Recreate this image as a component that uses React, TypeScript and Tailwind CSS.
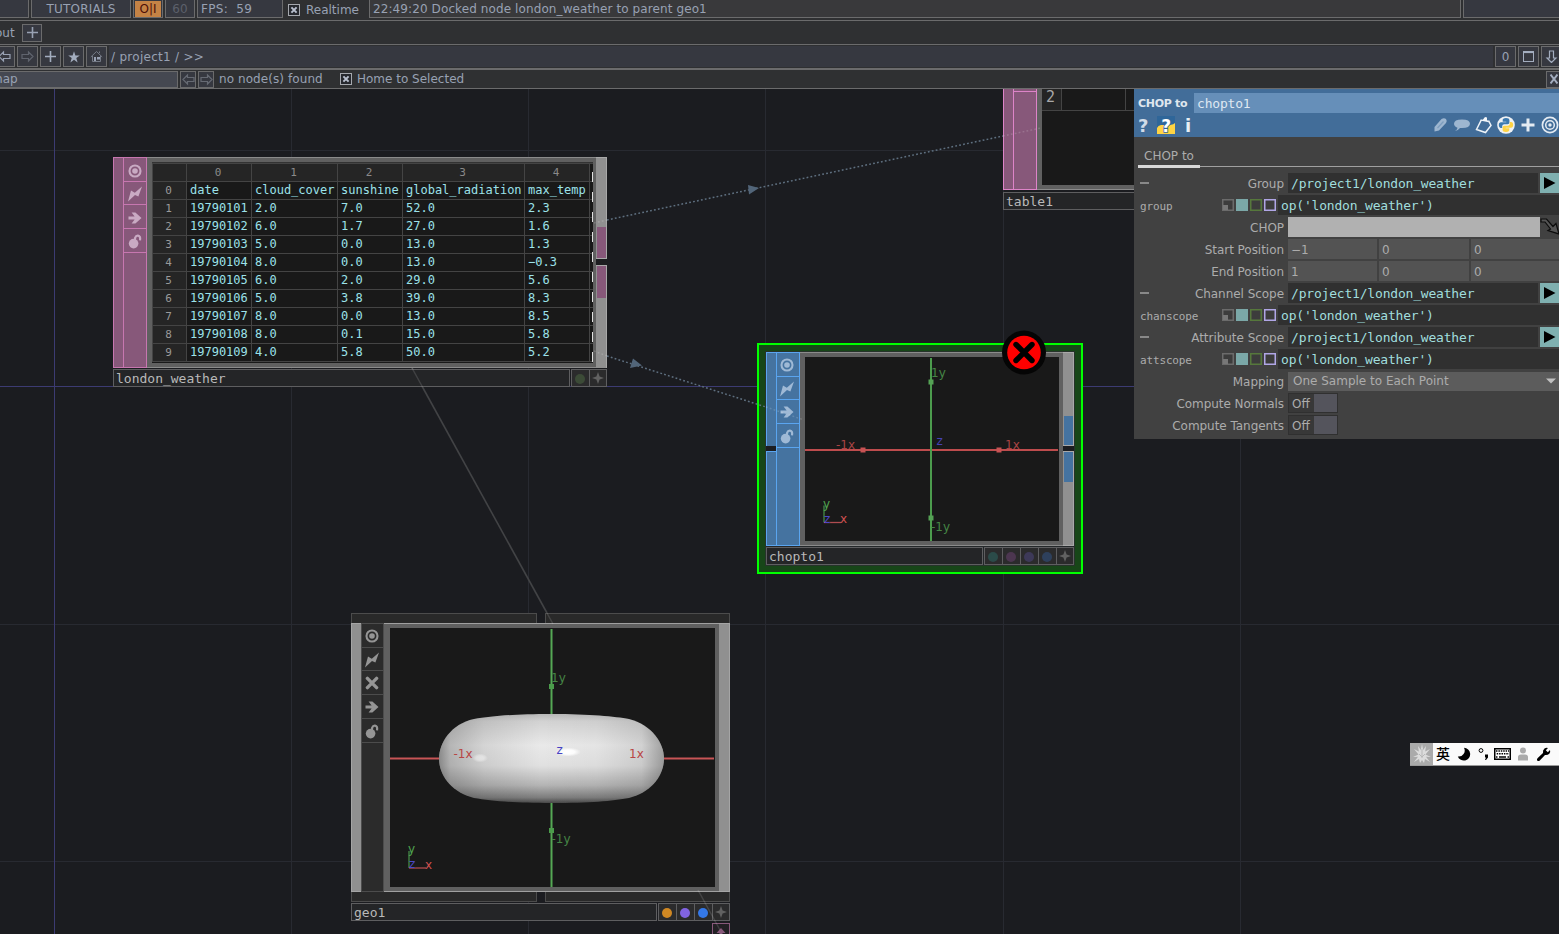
import React from "react";

type Kids = { children?: React.ReactNode };

/* ---------- shared glyphs ---------- */

function Target() {
  return (
    <svg width="14" height="14" viewBox="0 0 14 14">
      <circle cx="7" cy="7" r="5.5" fill="none" stroke="currentColor" strokeWidth="2.1" />
      <circle cx="7" cy="7" r="2.8" fill="currentColor" />
    </svg>
  );
}
function Bolt() {
  return (
    <svg width="16" height="16" viewBox="0 0 16 16">
      <path d="M1 15.5 L4 4.6 L7.8 6.8 L15 0.5 L11.4 10.6 L8 8.9 Z" fill="currentColor" />
    </svg>
  );
}
function Arrow() {
  return (
    <svg width="14" height="14" viewBox="0 0 14 14">
      <path d="M0.5 5.4 H6.6 L3.6 1.4 H7.4 L13.5 7 L7.4 12.6 H3.6 L6.6 8.6 H0.5 Z" fill="currentColor" />
    </svg>
  );
}
function Lock() {
  return (
    <svg width="14" height="15" viewBox="0 0 14 15">
      <circle cx="5.6" cy="9.6" r="4.8" fill="currentColor" />
      <path d="M6.8 6.5 L7.2 3.6 Q8 1.4 10 1.6 Q12.8 2 12 6.4" fill="none" stroke="currentColor" strokeWidth="2.2" />
    </svg>
  );
}
function Cross() {
  return (
    <svg width="14" height="14" viewBox="0 0 14 14">
      <path d="M2.4 2.4 L11.6 11.6 M11.6 2.4 L2.4 11.6" stroke="currentColor" strokeWidth="3.4" strokeLinecap="round" />
    </svg>
  );
}
function Sparkle() {
  return (
    <svg width="12" height="12" viewBox="0 0 12 12">
      <path d="M6 0 L7.6 4.4 L12 6 L7.6 7.6 L6 12 L4.4 7.6 L0 6 L4.4 4.4 Z" fill="#616161" />
    </svg>
  );
}

/* ---------- top bars ---------- */

function ToolBox({ children, className = "" }: Kids & { className?: string }) {
  return (
    <div className={"flex shrink-0 items-center border border-[#6b6b6c] " + className}>{children}</div>
  );
}

function CheckX() {
  return (
    <svg width="12" height="12" viewBox="0 0 12 12" className="shrink-0">
      <rect x="0.5" y="0.5" width="11" height="11" fill="#26282e" stroke="#a5a8ae" />
      <path d="M3.4 3.4 L8.6 8.6 M8.6 3.4 L3.4 8.6" stroke="#b9c0cf" strokeWidth="2" />
    </svg>
  );
}

function BlockArrow({ dir, color }: { dir: "l" | "r" | "d"; color: string }) {
  const d =
    dir === "l"
      ? "M1 6.5 L5.5 2 V4.5 H12 V8.5 H5.5 V11 Z"
      : dir === "r"
        ? "M12 6.5 L7.5 2 V4.5 H1 V8.5 H7.5 V11 Z"
        : "M6.5 12.5 L2 8 H4.5 V1 H8.5 V8 H11 Z";
  return (
    <svg width="13" height="13" viewBox="0 0 13 13" className="shrink-0">
      <path d={d} fill="none" stroke={color} strokeWidth="1.2" />
    </svg>
  );
}

function TopBars() {
  return (
    <header className="shrink-0 bg-[#2f3032] text-[12px] text-[#98a1b3]">
      <div className="flex h-[21px] items-start border-b border-[#6b6b6c]">
        <ToolBox className="h-[18px] w-[29px] border-l-0 border-t-0 bg-[#363840]" />
        <ToolBox className="ml-[2px] h-[18px] w-[100px] justify-center border-t-0 bg-[#363840] tracking-[0.2px]">TUTORIALS</ToolBox>
        <ToolBox className="ml-[2px] h-[18px] w-[30px] border-t-0 bg-[#363840]">
          <div className="mx-auto flex h-[16px] w-[26px] items-center justify-center bg-[#c58345] text-[#4d0f08]">O|I</div>
        </ToolBox>
        <ToolBox className="ml-[2px] h-[18px] w-[30px] justify-center border-t-0 bg-[#363840] text-[#5c606b]">60</ToolBox>
        <ToolBox className="ml-[2px] h-[18px] w-[86px] whitespace-pre border-t-0 bg-[#363840] pl-[3px] tracking-[0.3px]">FPS:  59</ToolBox>
        <div className="flex h-[20px] w-[84px] shrink-0 items-center gap-[6px] pl-[5px]">
          <CheckX />
          <span>Realtime</span>
        </div>
        <ToolBox className="ml-[2px] h-[18px] w-[1092px] border-t-0 bg-[#39393b] pl-[3px] tracking-[0.1px]">
          22:49:20 Docked node london_weather to parent geo1
        </ToolBox>
        <ToolBox className="ml-[2px] h-[18px] w-[100px] border-t-0 bg-[#363840]" />
      </div>

      <div className="flex h-[24px] items-center border-b border-[#6b6b6c]">
        <span className="-ml-[5px] w-[27px]">out</span>
        <ToolBox className="h-[18px] w-[20px] justify-center bg-[#363840]">
          <svg width="11" height="11" viewBox="0 0 11 11">
            <path d="M5.5 0 V11 M0 5.5 H11" stroke="#98a1b3" strokeWidth="1.6" />
          </svg>
        </ToolBox>
      </div>

      <div className="flex h-[25px] items-center border-b-2 border-[#6b6b6c]">
        <ToolBox className="-ml-[6px] h-[21px] w-[21px] justify-center bg-[#363840]">
          <BlockArrow dir="l" color="#98a1b3" />
        </ToolBox>
        <ToolBox className="ml-[2px] h-[21px] w-[21px] justify-center bg-[#363840]">
          <BlockArrow dir="r" color="#60646e" />
        </ToolBox>
        <ToolBox className="ml-[2px] h-[21px] w-[21px] justify-center bg-[#363840]">
          <svg width="11" height="11" viewBox="0 0 11 11">
            <path d="M5.5 0 V11 M0 5.5 H11" stroke="#a3adbf" strokeWidth="1.6" />
          </svg>
        </ToolBox>
        <ToolBox className="ml-[2px] h-[21px] w-[21px] justify-center bg-[#363840]">
          <svg width="12" height="12" viewBox="0 0 12 12">
            <path d="M6 0.3 L7.4 4.4 H11.8 L8.3 7 L9.6 11.4 L6 8.8 L2.4 11.4 L3.7 7 L0.2 4.4 H4.6 Z" fill="#a3adbf" />
          </svg>
        </ToolBox>
        <ToolBox className="ml-[2px] h-[21px] w-[21px] justify-center bg-[#363840]">
          <svg width="13" height="13" viewBox="0 0 13 13">
            <path d="M0.8 7 L6.5 1.5 L12.2 7 M2.5 6 V11.5 H10.5 V6 M9.5 3 V1.5" fill="none" stroke="#747a86" />
            <path d="M4 7 h2 v4 h-2z M7 7 h3 v2.6 h-3z" fill="#98a1b3" />
          </svg>
        </ToolBox>
        <div className="ml-[2px] flex h-[21px] flex-1 items-center bg-[#363840] pl-[2px] tracking-[0.28px]">/ project1 / &gt;&gt;</div>
        <ToolBox className="ml-[2px] h-[21px] w-[21px] justify-center bg-[#363840]">0</ToolBox>
        <ToolBox className="ml-[2px] h-[21px] w-[21px] justify-center bg-[#363840]">
          <svg width="11" height="11" viewBox="0 0 11 11">
            <rect x="0.5" y="0.5" width="10" height="10" fill="none" stroke="#a3adbf" />
            <path d="M0 1.3 H11" stroke="#a3adbf" strokeWidth="1.6" />
          </svg>
        </ToolBox>
        <ToolBox className="-mr-[3px] ml-[2px] h-[21px] w-[21px] justify-center bg-[#363840]">
          <BlockArrow dir="d" color="#a3adbf" />
        </ToolBox>
      </div>

      <div className="flex h-[19px] items-center border-b border-[#6b6b6c]">
        <ToolBox className="h-[17px] w-[178px] border-l-0 bg-[#454851]">
          <span className="-ml-[9px]">map</span>
        </ToolBox>
        <ToolBox className="ml-[2px] h-[17px] w-[16px] justify-center bg-[#363840]">
          <BlockArrow dir="l" color="#666a73" />
        </ToolBox>
        <ToolBox className="ml-[2px] h-[17px] w-[16px] justify-center bg-[#363840]">
          <BlockArrow dir="r" color="#666a73" />
        </ToolBox>
        <span className="ml-[5px] w-[121px] whitespace-nowrap tracking-[0.08px]">no node(s) found</span>
        <CheckX />
        <span className="ml-[5px] flex-1">Home to Selected</span>
        <ToolBox className="-mr-[3px] h-[17px] w-[16px] justify-center bg-[#363840]">
          <svg width="8" height="10" viewBox="0 0 8 10">
            <path d="M0.5 0.5 L7.5 9.5 M7.5 0.5 L0.5 9.5" stroke="#a3adbf" strokeWidth="1.9" />
          </svg>
        </ToolBox>
      </div>
    </header>
  );
}

/* ---------- network nodes ---------- */

function FlagStack({ icons, line, shift }: { icons: React.ReactNode[]; line: string; shift: string }) {
  return (
    <>
      {icons.map((icon, i) => (
        <div
          key={i}
          className={
            "flex shrink-0 items-center justify-center border-b " + (i === 1 ? "h-[23px] " : "h-[24px] ") + shift + " " + line
          }
        >
          {icon}
        </div>
      ))}
    </>
  );
}

function TitleBar({ name, dots }: { name: string; dots: string[] }) {
  return (
    <div className="flex h-[18px] shrink-0 font-['DejaVu_Sans_Mono',monospace] text-[13px] leading-[18px] text-[#b9b9b9]">
      <div className="flex-1 border border-[#5e5e60] bg-[#242527] pl-[2px]">{name}</div>
      {dots.length > 0 && (
        <div className="ml-px flex border-l border-[#5e5e60]">
          {dots.map((c) => (
            <div key={c} className="flex w-[18px] items-center justify-center border-y border-r border-[#5e5e60] bg-[#2b2b2c] pr-[2px]">
              <span className="mt-[2px] size-[10px] rounded-full" style={{ background: c }} />
            </div>
          ))}
          <div className="flex w-[17px] items-center justify-center border-y border-r border-[#5e5e60] bg-[#2b2b2c]">
            <Sparkle />
          </div>
        </div>
      )}
    </div>
  );
}

const ROWS = [
  ["date", "cloud_cover", "sunshine", "global_radiation", "max_temp"],
  ["19790101", "2.0", "7.0", "52.0", "2.3"],
  ["19790102", "6.0", "1.7", "27.0", "1.6"],
  ["19790103", "5.0", "0.0", "13.0", "1.3"],
  ["19790104", "8.0", "0.0", "13.0", "-0.3"],
  ["19790105", "6.0", "2.0", "29.0", "5.6"],
  ["19790106", "5.0", "3.8", "39.0", "8.3"],
  ["19790107", "8.0", "0.0", "13.0", "8.5"],
  ["19790108", "8.0", "0.1", "15.0", "5.8"],
  ["19790109", "4.0", "5.8", "50.0", "5.2"],
];
const COLS = "grid grid-cols-[34px_65px_86px_65px_122px_65px_3px]";

function WeatherNode() {
  return (
    <div className="absolute left-[113px] top-[68px] flex w-[494px] flex-col">
      <div className="flex h-[211px]">
        <div className="w-[10px] border-y border-l border-[#c777b0] bg-[#87587a]" />
        <div className="w-[24px] border border-[#c777b0] bg-[#87587a] text-[#c9aac3]">
          <FlagStack icons={[<Target />, <Bolt />, <Arrow />, <Lock />]} line="border-[#c777b0]" shift="pt-[2px]" />
        </div>
        <div className="flex w-[449px] flex-col border-y border-[#8b8b8b] bg-[#606060] px-[5px] py-[4px]">
          <div className="relative h-[201px] w-[441px] overflow-hidden border-t border-[#333333] bg-[#191919] font-['DejaVu_Sans_Mono',monospace] text-[12px] leading-[17px]">
            <div className={COLS + " h-[19px] border-b border-t border-[#444444] text-center text-[11px] text-[#8a8a8a]"}>
              {["", "0", "1", "2", "3", "4"].map((h, i) => (
                <div key={i} className="border-l border-[#444444] bg-[#252525] pr-[2px]">{h}</div>
              ))}
              <div className="border-l border-[#444444]" />
            </div>
            {ROWS.map((r, n) => (
              <div key={n} className={COLS + " h-[18px] border-b border-[#444444] text-[#9ce2ea]"}>
                <div className="border-l border-[#444444] bg-[#252525] pr-[2px] text-center text-[11px] text-[#9a9a9a]">{n}</div>
                {r.map((c, i) => (
                  <div key={i} className="whitespace-nowrap border-l border-[#444444] pl-[3px]">{c.replace("-", "−")}</div>
                ))}
                <div className="border-l border-[#444444]" />
              </div>
            ))}
            <svg className="absolute right-0 top-0" width="2" height="200">
              <path d="M1.5 9 V200" stroke="#e0e0e0" strokeDasharray="10 10" />
            </svg>
          </div>
        </div>
        <div className="flex w-[11px] flex-col bg-[#606060]">
          <div className="flex h-[102px] flex-col justify-end border-b border-r border-t border-[#a9a9a9] bg-[#909090]">
            <div className="ml-px h-[31px] bg-[#87587a]" />
          </div>
          <div className="h-[6px] bg-[#1c1d20]" />
          <div className="h-[103px] border-r border-t border-[#a9a9a9] bg-[#909090]">
            <div className="ml-px h-[32px] bg-[#87587a]" />
          </div>
        </div>
      </div>
      <div className="mt-px w-[494px]">
        <TitleBar name="london_weather" dots={["#3c4b37"]} />
      </div>
    </div>
  );
}

function TableNode() {
  return (
    <div className="absolute left-[1003px] top-0 w-[140px]">
      <div className="flex h-[101px]">
        <div className="w-[10px] border-b border-l border-[#dd84c8] bg-[#87587a]" />
        <div className="w-[24px] border-x border-b border-[#dd84c8] bg-[#87587a]">
          <div className="h-[3px] border-b border-[#dd84c8]" />
        </div>
        <div className="flex-1 border-b border-[#8b8b8b] bg-[#606060] pb-[4px] pl-[5px]">
          <div className="h-full bg-[#191919]">
            <div className="flex h-[22px] border-b border-[#444444] font-['DejaVu_Sans_Mono',monospace] text-[15px] leading-[16px] text-[#a8a8a8]">
              <div className="w-[20px] border-r border-[#444444] bg-[#242424] pl-[4px]">2</div>
              <div className="w-[64px] border-r border-[#444444]" />
            </div>
          </div>
        </div>
      </div>
      <div className="mt-[2px]">
        <TitleBar name="table1" dots={[]} />
      </div>
    </div>
  );
}

const axisText = { fontFamily: "DejaVu Sans, sans-serif", fontSize: 12 };

function Gnomon({ x, y }: { x: number; y: number }) {
  return (
    <g style={axisText}>
      <path d={`M${x} ${y - 17} V${y}`} stroke="#468a48" strokeWidth="1.3" />
      <path d={`M${x} ${y} H${x + 17}`} stroke="#b04c50" strokeWidth="1.3" />
      <text x={x - 1} y={y - 15} fill="#50a550">y</text>
      <text x={x} y={y} fill="#4c48c8">z</text>
      <text x={x + 16} y={y + 0.6} fill="#d05050">x</text>
    </g>
  );
}

function ChopNode() {
  const b = "border-[#5aa5f0]";
  return (
    <div className="absolute left-[757px] top-[254px] h-[231px] w-[326px] border-2 border-[#00ff00] bg-[#174618] p-[6px]">
      <div className="flex h-[215px] w-[310px] flex-col border border-[#26332a] bg-[#24282a]">
        <div className="flex h-[194px]">
          <div className="flex w-[10px] flex-col">
            <div className={"h-[94px] border-l border-t bg-[#4573a0] " + b} />
            <div className="h-[5px] bg-[#1c1d20]" />
            <div className={"flex-1 border-b border-l border-t bg-[#4573a0] " + b} />
          </div>
          <div className={"w-[24px] border bg-[#4573a0] text-[#9fb9d5] " + b}>
            <FlagStack icons={[<Target />, <Bolt />, <Arrow />, <Lock />]} line={b} shift="pt-[1px] pr-[2px]" />
          </div>
          <div className="w-[263px] border-y border-[#8b8b8b] bg-[#606060] py-[4px] pl-[5px]">
            <svg width="254" height="184" viewBox="805 357 254 184" className="block bg-[#191919]">
              <path d="M805 450 H1058" stroke="#be4c4d" strokeWidth="2" />
              <path d="M931 358 V541" stroke="#4c9c4d" strokeWidth="2" />
              <rect x="928.5" y="379.5" width="5" height="5" fill="#55a255" />
              <rect x="928.5" y="515.5" width="5" height="5" fill="#55a255" />
              <rect x="860.5" y="447.5" width="5" height="5" fill="#c85354" />
              <rect x="996.5" y="447.5" width="5" height="5" fill="#c85354" />
              <g style={axisText}>
                <text x="931" y="376.5" fill="#458545">1y</text>
                <text x="931" y="530.5" fill="#458545">-1y</text>
                <text x="836" y="449" fill="#a84444">-1x</text>
                <text x="1005" y="449" fill="#a84444">1x</text>
                <text x="936.5" y="444.5" fill="#4542b5">z</text>
              </g>
              <Gnomon x={824} y={522.5} />
            </svg>
          </div>
          <div className="flex w-[11px] flex-col">
            <div className="flex h-[94px] flex-col justify-end border-b border-r border-t border-[#a9a9a9] bg-[#909090]">
              <div className="ml-px h-[29px] bg-[#4573a0]" />
            </div>
            <div className="h-[5px] bg-[#1c1d20]" />
            <div className="flex-1 border-b border-r border-t border-[#a9a9a9] bg-[#909090]">
              <div className="ml-px h-[30px] bg-[#4573a0]" />
            </div>
          </div>
        </div>
        <div className="mt-px">
          <TitleBar name="chopto1" dots={["#2b4b49", "#4c3650", "#3d3958", "#2e405c"]} />
        </div>
      </div>
      <svg className="absolute left-[242px] top-[-16px]" width="46" height="46" viewBox="0 0 46 46">
        <circle cx="23" cy="23.5" r="22" fill="#050505" />
        <circle cx="23" cy="23.5" r="16.8" fill="#ff0000" />
        <path d="M15 15.5 L31 31.5 M31 15.5 L15 31.5" stroke="#000" strokeWidth="5.4" strokeLinecap="round" />
      </svg>
    </div>
  );
}

const TORUS =
  "M551.5 714 C590 714 615 716.5 629 719 C652 725 664 743 664 758.5 C664 775 652 792 629 798 C612 801 590 803 551.5 803 C513 803 492 801 474 798 C451 792 439 775 439 758.5 C439 743 451 724 474 719 C492 716 513 714 551.5 714 Z";

function GeoNode() {
  const b = "border-[#4c4c4c]";
  return (
    <div className="absolute left-[351px] top-[524px] w-[379px]">
      <div className="flex h-[10px] gap-[8px]">
        <div className={"w-[186px] border border-b-0 bg-[#292929] " + b} />
        <div className={"w-[185px] border border-b-0 bg-[#292929] " + b} />
      </div>
      <div className="flex h-[269px]">
        <div className="w-[10px] border border-r-0 border-[#a5a5a5] bg-[#909090]" />
        <div className={"w-[23px] border bg-[#2b2b2b] text-[#959595] " + b}>
          <FlagStack icons={[<Target />, <Bolt />, <Cross />, <Arrow />, <Lock />]} line={b} shift="pr-[1px] pt-[1px]" />
        </div>
        <div className="w-[335px] border-y border-[#a0a0a0] bg-[#606060] py-[4px] pl-[6px]">
          <svg width="325" height="259" viewBox="390 628 325 259" className="block bg-[#191919]">
            <defs>
              <linearGradient id="body" x1="0" y1="0" x2="0" y2="1">
                <stop offset="0" stopColor="#b8b8b8" />
                <stop offset="0.08" stopColor="#d2d2d2" />
                <stop offset="0.35" stopColor="#e9e9e9" />
                <stop offset="0.58" stopColor="#e0e0e0" />
                <stop offset="0.8" stopColor="#b4b4b4" />
                <stop offset="0.94" stopColor="#7c7c7c" />
                <stop offset="1" stopColor="#484848" />
              </linearGradient>
              <linearGradient id="sides">
                <stop offset="0" stopColor="#000" stopOpacity="0.4" />
                <stop offset="0.05" stopColor="#000" stopOpacity="0.22" />
                <stop offset="0.2" stopColor="#000" stopOpacity="0.09" />
                <stop offset="0.45" stopColor="#000" stopOpacity="0" />
                <stop offset="0.7" stopColor="#000" stopOpacity="0.02" />
                <stop offset="0.9" stopColor="#000" stopOpacity="0.1" />
                <stop offset="1" stopColor="#000" stopOpacity="0.32" />
              </linearGradient>
              <radialGradient id="spec">
                <stop offset="0" stopColor="#fff" />
                <stop offset="0.5" stopColor="#fff" stopOpacity="0.9" />
                <stop offset="1" stopColor="#fff" stopOpacity="0" />
              </radialGradient>
            </defs>
            <path d="M390 758.5 H714" stroke="#c85556" strokeWidth="2" />
            <path d="M551.5 629 V887" stroke="#55a855" strokeWidth="2" />
            <path d={TORUS} fill="url(#body)" />
            <path d={TORUS} fill="url(#sides)" />
            <ellipse cx="568" cy="752" rx="13" ry="4.5" fill="url(#spec)" />
            <ellipse cx="480" cy="758" rx="8" ry="4.5" fill="url(#spec)" opacity="0.45" />
            <rect x="549" y="684" width="5" height="5" fill="#4b9c4b" />
            <rect x="549" y="828" width="5" height="5" fill="#4b9c4b" />
            <g style={axisText}>
              <text x="551" y="681.5" fill="#458545">1y</text>
              <text x="551.5" y="843" fill="#458545">-1y</text>
              <text x="453.5" y="758" fill="#b84545">-1x</text>
              <text x="629" y="758" fill="#b84545">1x</text>
              <text x="556.5" y="753.5" fill="#4542c5">z</text>
            </g>
            <Gnomon x={409} y={868} />
          </svg>
        </div>
        <div className="w-[11px] border border-l-0 border-[#a5a5a5] bg-[#909090]" />
      </div>
      <div className="flex h-[10px] gap-[8px]">
        <div className={"w-[186px] border border-t-0 bg-[#292929] " + b} />
        <div className={"w-[185px] border border-t-0 bg-[#292929] " + b} />
      </div>
      <div className="mt-px">
        <TitleBar name="geo1" dots={["#d08823", "#8163e0", "#3478e8"]} />
      </div>
    </div>
  );
}

function Network() {
  return (
    <main className="relative flex-1 overflow-hidden bg-[#1b1c20]">
      <svg className="absolute inset-0" width="1559" height="845" viewBox="0 89 1559 845">
        <path
          d="M291.5 89 V934 M528.5 89 V934 M765.5 89 V934 M1003.5 89 V934 M1240.5 89 V934 M0 150.5 H1559 M0 624.5 H1559 M0 861.5 H1559"
          stroke="#282a31"
        />
        <path d="M54.5 89 V934 M0 386.5 H1559" stroke="#3c3b72" />
        <path d="M412 368 L547 613" stroke="#424345" strokeWidth="1.6" />
      </svg>
      <WeatherNode />
      <TableNode />
      <ChopNode />
      <GeoNode />
      <div className="absolute left-[712px] top-[834px] flex h-[14px] w-[18px] justify-center border border-[#87587a] bg-[#222024] pt-[4px]">
        <svg width="10" height="10" viewBox="0 0 10 10">
          <path d="M5 0 L9.5 5 H6.5 V10 H3.5 V5 H0.5 Z" fill="#87587a" />
        </svg>
      </div>
      <svg className="absolute inset-0" width="1559" height="845" viewBox="0 89 1559 845">
        <g fill="none" stroke="#5f7080" strokeWidth="1.5" strokeDasharray="1.8 2.2">
          <path d="M607 220 L1003 136" />
          <path d="M607 356 L766 407" />
        </g>
        <g fill="none" stroke="#ffffff" strokeOpacity="0.16" strokeWidth="1.5" strokeDasharray="1.8 2.2">
          <path d="M594 223 L607 220 M1003 136 L1041 128 M594 351 L607 356 M766 407 L804 420" />
        </g>
        <path d="M748 185 L759 188 L749 194.5 Z M633 358.5 L642 365.5 L630 368 Z" fill="#526579" />
        <path d="M412 368 L422.5 387 M547 613 L553 624 M698 890 L720 930" stroke="#ffffff" strokeOpacity="0.13" strokeWidth="1.5" />
      </svg>
      <ParameterPanel />
      <ImeBar />
    </main>
  );
}

/* ---------- parameter dialog ---------- */

function ModeBoxes() {
  return (
    <svg width="54" height="12" viewBox="0 0 54 12" className="shrink-0">
      <rect x="0.75" y="0.75" width="10.5" height="10.5" fill="#3c3c3c" stroke="#6b6b6b" strokeWidth="1.5" />
      <rect x="1" y="6" width="5" height="5" fill="#777777" />
      <rect x="14" y="0" width="12" height="12" fill="#7ba8a8" />
      <rect x="28.75" y="0.75" width="10.5" height="10.5" fill="#3c3c3c" stroke="#56783c" strokeWidth="1.5" />
      <rect x="42.75" y="0.75" width="10.5" height="10.5" fill="#3c3c3c" stroke="#b0a6e6" strokeWidth="1.5" />
    </svg>
  );
}

function Label({ children, collapse }: Kids & { collapse?: boolean }) {
  return (
    <div className="flex w-[154px] shrink-0 items-center pl-[6px] pr-[4px]">
      {collapse && <span className="h-[2px] w-[9px] bg-[#888888]" />}
      <span className="ml-auto whitespace-nowrap pt-[2px] tracking-[-0.04px]">{children}</span>
    </div>
  );
}

function ExprRow({ label, param }: { label: string; param: string }) {
  return (
    <>
      <div className="flex h-[22px] items-center">
        <Label collapse>{label}</Label>
        <div className="h-[20px] w-[250px] bg-[#303030] pl-[3px] font-['DejaVu_Sans_Mono',monospace] text-[13px] leading-[22px] tracking-[-0.19px] text-[#a0dede]">
          /project1/london_weather
        </div>
        <div className="ml-[2px] flex h-[20px] flex-1 items-center bg-[#7fb0b0] pl-[4px]">
          <svg width="12" height="12" viewBox="0 0 12 12">
            <path d="M0 0 L11.5 6 L0 12 Z" fill="#000" />
          </svg>
        </div>
      </div>
      <div className="flex h-[22px] items-center font-['DejaVu_Sans_Mono',monospace]">
        <span className="w-[88px] pl-[6px] pt-[4px] text-[11px] leading-[18px] tracking-[-0.15px]">{param}</span>
        <ModeBoxes />
        <div className="ml-[2px] h-[20px] flex-1 bg-[#303030] pl-[3px] text-[13px] leading-[22px] tracking-[-0.19px] text-[#a0dede]">
          op('london_weather')
        </div>
      </div>
    </>
  );
}

function VectorRow({ label, values }: { label: string; values: string[] }) {
  return (
    <div className="flex h-[22px] items-center">
      <Label>{label}</Label>
      <div className="grid h-[20px] flex-1 grid-cols-[89px_90px_88px] gap-[2px] leading-[22px]">
        {values.map((v, i) => (
          <div key={i} className="h-[20px] bg-[#535353] pl-[3px]">{v}</div>
        ))}
      </div>
    </div>
  );
}

function ToggleRow({ label }: { label: string }) {
  return (
    <div className="flex h-[22px] items-center">
      <Label>{label}</Label>
      <div className="flex h-[20px] w-[50px] border border-[#303030] bg-[#383838]">
        <span className="w-[25px] pl-[3px] leading-[20px]">Off</span>
        <span className="flex-1 bg-[#54545c]" />
      </div>
    </div>
  );
}

function PythonMark() {
  return (
    <svg width="18" height="18" viewBox="0 0 18 18">
      <circle cx="9" cy="9" r="8.8" fill="#eef1f4" />
      <path d="M9 2 C6.3 2 5.7 3 5.7 4.2 V5.7 H9.3 V6.3 H4 C2.6 6.3 1.8 7.4 1.8 9 C1.8 10.8 2.6 11.9 3.9 11.9 H5.2 V10.2 C5.2 9 6.2 8.2 7.3 8.2 H10.6 C11.7 8.2 12.4 7.5 12.4 6.5 V4.2 C12.4 2.8 11.4 2 9 2 Z" fill="#3d7ab0" />
      <path d="M9 16 C11.7 16 12.3 15 12.3 13.8 V12.3 H8.7 V11.7 H14 C15.4 11.7 16.2 10.6 16.2 9 C16.2 7.2 15.4 6.1 14.1 6.1 H12.8 V7.8 C12.8 9 11.8 9.8 10.7 9.8 H7.4 C6.3 9.8 5.6 10.5 5.6 11.5 V13.8 C5.6 15.2 6.6 16 9 16 Z" fill="#ffd343" />
    </svg>
  );
}

function ParameterPanel() {
  return (
    <section className="absolute left-[1134px] top-0 flex h-[350px] w-[425px] flex-col bg-[#414141] text-[12px] text-[#acacac]">
      <div className="h-[48px] shrink-0 bg-[#426d99] pt-[4px]">
        <div className="flex h-[20px] items-center">
          <span className="w-[60px] whitespace-nowrap pl-[4px] pt-[2px] text-[11px] font-bold tracking-[-0.3px] text-[#dfe6ee]">CHOP to</span>
          <div className="h-[20px] flex-1 bg-[#668fb9] pl-[3px] font-['DejaVu_Sans_Mono',monospace] text-[13px] leading-[22px] tracking-[-0.19px] text-[#dfe8f2]">
            chopto1
          </div>
        </div>
        <div className="flex h-[24px] items-center">
          <span className="ml-[4px] w-[19px] pt-px text-[18px] font-bold leading-[23px] text-[#d0dbe8]">?</span>
          <svg width="18" height="18" viewBox="0 0 18 18" className="block bg-[#2f6699]">
            <path d="M0 18 V12 Q1 9.5 4 9 H13 Q17 8.5 18 7 V18 Z" fill="#ffd343" />
            <text x="4.2" y="15.5" fontFamily="DejaVu Sans, sans-serif" fontWeight="bold" fontSize="17" fill="#fff" stroke="#2f6699" strokeWidth="1.6" paintOrder="stroke">?</text>
          </svg>
          <span className="ml-[10px] flex-1 pt-px text-[18px] font-bold leading-[23px] text-[#e8eef4]">i</span>
          <div className="flex items-center gap-[4px]">
            <svg width="16" height="16" viewBox="0 0 16 16">
              <path d="M1.5 14.5 V10 L8.5 2 Q11 0.5 13 2 Q14.5 4 13 6 L6 13.5 Z" fill="#9db6d0" />
              <path d="M4.5 11 L10.5 4.5" stroke="#7d9dbe" strokeWidth="1.2" />
            </svg>
            <svg width="18" height="14" viewBox="0 0 18 14">
              <path d="M2 13 Q4.5 11.5 4.5 9.8 Q1 8.5 1 5.8 Q1 1.5 9 1.5 Q17 1.5 17 5.8 Q17 10 9 10 L7 9.9 Q5 12.5 2 13 Z" fill="#9db6d0" />
            </svg>
            <svg width="18" height="18" viewBox="0 0 18 18">
              <path d="M6.5 3.5 L1.5 13.5 L10.5 16.5 L16 9.5 L13.5 4.5" fill="none" stroke="#eef3f8" strokeWidth="1.5" />
              <path d="M5 4.5 L8 3.5 L10 1 L12 1.5 V4 L15 6.5 Z" fill="#f4f7fa" />
            </svg>
            <PythonMark />
            <svg width="18" height="18" viewBox="0 0 18 18">
              <path d="M9 2.5 V15.5 M2.5 9 H15.5" stroke="#e4ebf2" strokeWidth="3" />
            </svg>
            <svg width="18" height="18" viewBox="0 0 18 18">
              <circle cx="9" cy="9" r="7.6" fill="none" stroke="#e4ebf2" strokeWidth="1.7" />
              <circle cx="9" cy="9" r="4.3" fill="none" stroke="#e4ebf2" strokeWidth="1.5" />
              <circle cx="9" cy="9" r="1.7" fill="#e4ebf2" />
            </svg>
          </div>
        </div>
      </div>

      <div className="ml-[4px] mt-[10px] flex h-[20px] shrink-0 border-b border-[#a0a0a0]">
        <div className="-mb-px h-[21px] w-[62px] whitespace-nowrap border-b-[3px] border-[#d8d8d8] pl-[6px] leading-[18px]">
          CHOP to
        </div>
      </div>

      <div className="mt-[5px] flex flex-col">
        <ExprRow label="Group" param="group" />
        <div className="flex h-[22px] items-center">
          <Label>CHOP</Label>
          <div className="h-[20px] w-[252px] bg-[#b1b1b1]" />
          <svg width="19" height="20" viewBox="0 0 19 20">
            <path d="M1 2 H6.5 L13 9.5 L16 6.5 L19 17 L8 13.5 L10.5 12 L5 5 H1 Z" fill="#555555" stroke="#0c0c0c" strokeWidth="1.2" />
          </svg>
        </div>
        <VectorRow label="Start Position" values={["−1", "0", "0"]} />
        <VectorRow label="End Position" values={["1", "0", "0"]} />
        <ExprRow label="Channel Scope" param="chanscope" />
        <ExprRow label="Attribute Scope" param="attscope" />
        <div className="flex h-[22px] items-center">
          <Label>Mapping</Label>
          <div className="flex h-[19px] flex-1 items-center bg-[#5c5c5c] pl-[5px] pr-[3px]">
            <span className="flex-1">One Sample to Each Point</span>
            <svg width="10" height="6" viewBox="0 0 10 6">
              <path d="M0 0.5 H10 L5 5.5 Z" fill="#c0c0c0" />
            </svg>
          </div>
        </div>
        <ToggleRow label="Compute Normals" />
        <ToggleRow label="Compute Tangents" />
      </div>
    </section>
  );
}

/* ---------- input method bar ---------- */

function ImeBar() {
  return (
    <aside className="absolute left-[1410px] top-[654px] flex h-[23px] w-[149px] items-center border-b border-[#999999] bg-[#fafafa] text-black">
      <div className="flex h-full w-[23px] items-center justify-center bg-[#aaaaaa]">
        <svg width="20" height="20" viewBox="0 0 20 20">
          <path
            d="M10 0 L11.2 6 L14 2 L13.2 7.5 L18 5 L13.5 10.5 L19 13 L14 12.8 L18 18 L13 15 L12 19 L10 16 L8 19 L7 15 L2 18 L6 12.8 L1 13 L6.5 10.5 L2 5 L6.8 7.5 L6 2 L8.8 6 Z"
            fill="#dcdcdc"
          />
          <path d="M10 5 V14 M7 10 L10 13 L13 10" stroke="#b8b8b8" fill="none" />
        </svg>
      </div>
      <span className="-mt-[2px] ml-[3px] w-[16px] font-['Noto_Sans_CJK_SC',sans-serif] text-[14px] font-medium leading-[20px]">英</span>
      <svg className="ml-[5px]" width="14" height="14" viewBox="0 0 14 14">
        <path d="M7 0.8 A6.4 6.4 0 1 1 0.8 9.5 A6 6 0 0 0 7 0.8 Z" fill="#000" />
      </svg>
      <svg className="ml-[7px]" width="12" height="14" viewBox="0 0 12 14">
        <circle cx="3" cy="3.5" r="1.9" fill="none" stroke="#000" />
        <path d="M7 7.500 h3 v3 L8 13 H7 L8 10.5 H7 Z" fill="#000" />
      </svg>
      <svg className="ml-[4px]" width="17" height="12" viewBox="0 0 17 12">
        <rect x="0.75" y="0.75" width="15.5" height="10.5" fill="#fff" stroke="#000" strokeWidth="1.5" />
        <path d="M2 3 H15 M2.7 5.8 H15" stroke="#000" strokeWidth="1.6" strokeDasharray="1.5 0.9" />
        <path d="M2 9 H3.5 M5 9 H12 M13.5 9 H15" stroke="#000" strokeWidth="1.6" />
      </svg>
      <svg className="ml-[7px]" width="10" height="14" viewBox="0 0 10 14">
        <circle cx="5" cy="3.5" r="3" fill="#aaaaaa" />
        <path d="M0 13.5 V10 Q0 7.5 3 7.5 H7 Q10 7.5 10 10 V13.5 Z" fill="#aaaaaa" />
      </svg>
      <svg className="ml-[8px]" width="15" height="15" viewBox="0 0 15 15">
        <path d="M1.5 11.2 L7 6 Q6.5 3 8.5 1.5 Q10.3 0.3 12 1 L9.8 3.2 L11.8 5.2 L14 3 Q14.7 5 13.3 6.7 Q11.5 8.4 9 8 L3.8 13.5 Q2.3 14.5 1.2 13.5 Q0.5 12.5 1.5 11.2 Z" fill="#000" />
      </svg>
    </aside>
  );
}

export default function App() {
  return (
    <div className="flex h-[934px] w-[1559px] flex-col overflow-hidden bg-[#1b1c20] font-['DejaVu_Sans',sans-serif]">
      <TopBars />
      <Network />
    </div>
  );
}
